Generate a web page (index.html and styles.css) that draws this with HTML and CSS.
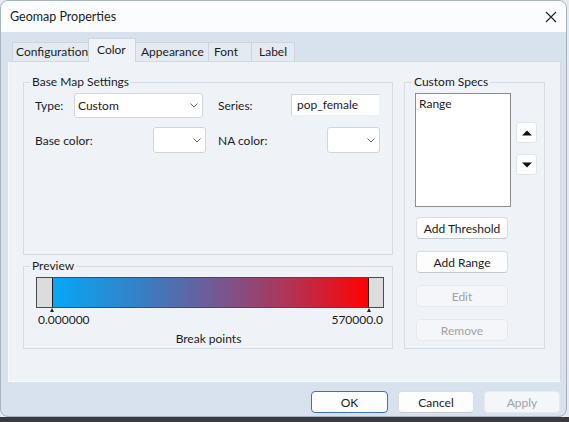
FILE: index.html
```html
<!DOCTYPE html>
<html>
<head>
<meta charset="utf-8">
<title>Geomap Properties</title>
<link rel="stylesheet" href="styles.css">
</head>
<body>
<div class="dialog">
  <header class="titlebar">
    <span class="title">Geomap Properties</span>
    <span class="close">
      <svg width="12" height="12" viewBox="0 0 12 12"><path d="M1 1 L11 11 M11 1 L1 11" stroke="#222" stroke-width="1.1" fill="none"/></svg>
    </span>
  </header>
  <nav class="tabs">
    <div class="tab tab-config">Configuration</div>
    <div class="tab tab-color active">Color</div>
    <div class="tab tab-appear">Appearance</div>
    <div class="tab tab-font">Font</div>
    <div class="tab tab-label">Label</div>
  </nav>
  <main class="panel">
    <div class="col-left">
      <fieldset class="group basemap">
        <legend>Base Map Settings</legend>
        <div class="row row1">
          <span class="lbl lbl-type">Type:</span>
          <div class="combo combo-type"><span class="combo-text">Custom</span><svg class="chev" width="8" height="5" viewBox="0 0 8 5"><path d="M0.5 0.5 L4 4 L7.5 0.5" stroke="#666" stroke-width="1" fill="none"/></svg></div>
          <span class="lbl lbl-series">Series:</span>
          <div class="textbox">pop_female</div>
        </div>
        <div class="row row2">
          <span class="lbl lbl-base">Base color:</span>
          <div class="combo combo-color"><svg class="chev" width="8" height="5" viewBox="0 0 8 5"><path d="M0.5 0.5 L4 4 L7.5 0.5" stroke="#666" stroke-width="1" fill="none"/></svg></div>
          <span class="lbl lbl-na">NA color:</span>
          <div class="combo combo-color"><svg class="chev" width="8" height="5" viewBox="0 0 8 5"><path d="M0.5 0.5 L4 4 L7.5 0.5" stroke="#666" stroke-width="1" fill="none"/></svg></div>
        </div>
      </fieldset>
      <fieldset class="group preview">
        <legend>Preview</legend>
        <div class="bar">
          <div class="cap cap-left"></div>
          <div class="grad"></div>
          <div class="cap cap-right"></div>
        </div>
        <div class="ticks"><span class="tick"></span><span class="tick"></span></div>
        <div class="scale"><span>0.000000</span><span>570000.0</span></div>
        <div class="caption">Break points</div>
      </fieldset>
    </div>
    <fieldset class="group specs">
      <legend>Custom Specs</legend>
      <div class="specs-top">
        <div class="listbox"><div class="list-item">Range</div></div>
        <div class="arrows">
          <button class="arrow-btn"><svg width="10" height="6" viewBox="0 0 10 6"><path d="M0 5.5 L5 0.5 L10 5.5 Z" fill="#111"/></svg></button>
          <button class="arrow-btn"><svg width="10" height="6" viewBox="0 0 10 6"><path d="M0 0.5 L5 5.5 L10 0.5 Z" fill="#111"/></svg></button>
        </div>
      </div>
      <div class="spec-buttons">
        <button class="btn">Add Threshold</button>
        <button class="btn">Add Range</button>
        <button class="btn disabled">Edit</button>
        <button class="btn disabled">Remove</button>
      </div>
    </fieldset>
  </main>
  <footer class="footer">
    <button class="btn btn-foot default">OK</button>
    <button class="btn btn-foot">Cancel</button>
    <button class="btn btn-foot disabled">Apply</button>
  </footer>
</div>
</body>
</html>
```
FILE: styles.css
```css
* { box-sizing: border-box; }
html, body { margin: 0; padding: 0; }
body {
  width: 569px;
  height: 422px;
  overflow: hidden;
  background: linear-gradient(to bottom, #e8ebee 0, #e8ebee 417px, #3a3a3c 417px);
  font-family: "Lato", "Segoe UI", sans-serif;
  font-size: 12px;
  color: #1b1b1b;
}
.dialog {
  width: 567px;
  height: 417px;
  background: #d8e2ee;
  border: 1px solid #a8b3c0;
  border-radius: 8px;
  overflow: hidden;
  display: flex;
  flex-direction: column;
}
.titlebar {
  height: 31px;
  flex: none;
  background: #fbfcfd;
  display: flex;
  align-items: center;
  justify-content: space-between;
  padding: 0 9px 0 9px;
}
.title { font-size: 12.5px; }
.close { display: flex; width: 12px; height: 12px; }

.tabs {
  display: flex;
  align-items: flex-end;
  margin-top: 6px;
  padding-left: 11px;
  height: 23px;
  flex: none;
}
.tab {
  height: 19px;
  line-height: 17px;
  background: #e4eaf1;
  border: 1px solid #cdd5df;
  border-bottom: none;
  margin-right: -1px;
  white-space: nowrap;
}
.tab-config { width: 77px; padding-left: 3px; }
.tab-color { width: 48px; padding-left: 8px; }
.tab-appear { width: 74px; padding-left: 5px; }
.tab-font { width: 44px; padding-left: 5px; }
.tab-label { width: 44px; padding-left: 7px; }
.tab.active {
  height: 24px;
  line-height: 21px;
  background: #eff3f8;
  position: relative;
  z-index: 1;
  margin-bottom: -1px;
}

.panel {
  margin: 0 5px 0 7px;
  height: 321px;
  flex: none;
  background: #eff3f8;
  border: 1px solid #d2d9e2;
  border-left-color: #f7f9fb;
  border-bottom-color: #fbfcfd;
  display: flex;
  gap: 11px;
  padding: 12px 0 0 14px;
}
.col-left {
  width: 370px;
  display: flex;
  flex-direction: column;
  gap: 3px;
}
.group {
  margin: 0;
  padding: 0;
  border: 1px solid #d6dce4;
  min-width: 0;
}
.group legend {
  padding: 0 2px;
  line-height: 16px;
  font-size: 12px;
}
.basemap { height: 181px; padding: 2px 0 0 11px; }
.basemap legend { margin-left: -5px; }
.row { display: flex; align-items: center; }
.row1 { height: 26px; }
.row2 { height: 26px; margin-top: 9px; }
.lbl { white-space: nowrap; }
.lbl-type { width: 39px; }
.lbl-series { width: 73px; }
.lbl-base { width: 118px; }
.lbl-na { width: 109px; }
.combo {
  height: 26px;
  background: #ffffff;
  border: 1px solid #d2d6db;
  border-radius: 3px;
  display: flex;
  align-items: center;
  justify-content: space-between;
  padding: 0 4px 0 3px;
}
.combo-type { width: 129px; height: 25px; margin-right: 15px; }
.combo-color { width: 53px; justify-content: flex-end; }
.row2 .combo-color:first-of-type { margin-right: 12px; }
.chev { display: block; }
.textbox {
  width: 89px;
  height: 22px;
  line-height: 20px;
  background: #ffffff;
  border: 1px solid #d3d6da;
  border-right-color: #eef0f2;
  border-bottom-color: #eef0f2;
  padding-left: 5px;
}

.preview { height: 91px; padding: 3px 8px 0 12px; }
.preview legend { margin-left: -6px; }
.bar {
  height: 31px;
  border: 1px solid #4a4a4a;
  display: flex;
}
.cap { background: #dcdcdc; }
.cap-left { width: 16px; border-right: 1px solid #1e1e1e; }
.cap-right { width: 15px; border-left: 1px solid #1e1e1e; }
.grad {
  flex: 1;
  background: linear-gradient(to right, #05a8f8 0%, #3b7cc0 30%, #6e5c98 50%, #b03456 75%, #ff0202 100%);
}
.ticks {
  height: 5px;
  display: flex;
  justify-content: space-between;
  padding: 0 13px 0 14px;
}
.tick {
  width: 0;
  height: 0;
  border-left: 2.5px solid transparent;
  border-right: 2.5px solid transparent;
  border-bottom: 4px solid #222;
}
.scale {
  display: flex;
  justify-content: space-between;
  line-height: 14px;
  padding: 0 1px 0 2px;
}
.caption { text-align: center; line-height: 14px; margin-top: 5px; padding-right: 3px; }

.specs { width: 141px; height: 275px; padding: 3px 0 0 10px; }
.specs legend { margin-left: -3px; }
.specs-top { display: flex; gap: 5px; }
.listbox {
  width: 96px;
  height: 114px;
  background: #ffffff;
  border: 1px solid #8c8c8c;
  padding: 2px 3px;
}
.list-item { line-height: 16px; }
.arrows {
  display: flex;
  flex-direction: column;
  gap: 11px;
  margin-top: 29px;
}
.arrow-btn {
  width: 21px;
  height: 21px;
  padding: 0;
  background: #ffffff;
  border: 1px solid #e1e4e8;
  border-radius: 3px;
  display: flex;
  align-items: center;
  justify-content: center;
}
.spec-buttons {
  display: flex;
  flex-direction: column;
  gap: 12px;
  margin-top: 10px;
  padding-left: 1px;
}
.btn {
  width: 92px;
  height: 22px;
  padding: 0;
  font-family: inherit;
  font-size: 12px;
  color: #1b1b1b;
  background: #fdfdfd;
  border: 1px solid #d9dce0;
  border-bottom-color: #c6c9cd;
  border-radius: 4px;
}
.btn.disabled {
  color: #a2a2a2;
  background: #f4f6f9;
  border-color: #e6e9ee;
}
.footer {
  display: flex;
  justify-content: flex-end;
  gap: 10px;
  margin-top: 9px;
  padding-right: 6px;
}
.btn-foot { width: 76px; }
.btn-foot.default { width: 77px; border: 1px solid #3f74ac; }
```
